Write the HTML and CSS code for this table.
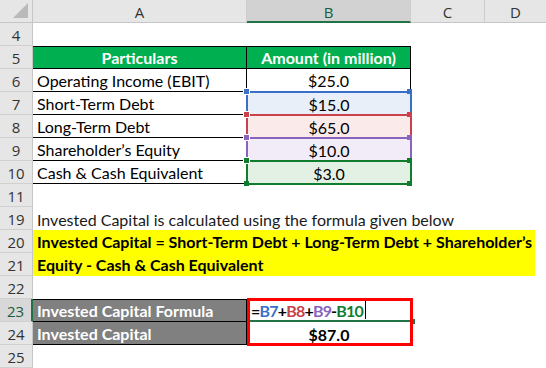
FILE: index.html
```html
<!DOCTYPE html>
<html>
<head>
<meta charset="utf-8">
<link rel="stylesheet" href="styles.css">
</head>
<body>
<div class="sheet">
  <div class="corner"><span class="tri"></span></div>
  <div class="colh">A</div>
  <div class="colh colh-sel">B</div>
  <div class="colh">C</div>
  <div class="colh colh-last">D</div>

  <div class="rowh">4</div><div class="c"></div><div class="c"></div><div class="c"></div><div class="c"></div>

  <div class="rowh">5</div>
  <div class="c th th-a">Particulars</div>
  <div class="c th th-b">Amount (in million)</div>
  <div class="c"></div><div class="c"></div>

  <div class="rowh">6</div>
  <div class="c ta">Operating Income (EBIT)</div>
  <div class="c tb">$25.0</div>
  <div class="c"></div><div class="c"></div>

  <div class="rowh">7</div>
  <div class="c ta">Short-Term Debt</div>
  <div class="c tb ref ref-blue">$15.0</div>
  <div class="c"></div><div class="c"></div>

  <div class="rowh">8</div>
  <div class="c ta">Long-Term Debt</div>
  <div class="c tb ref ref-red">$65.0</div>
  <div class="c"></div><div class="c"></div>

  <div class="rowh">9</div>
  <div class="c ta">Shareholder’s Equity</div>
  <div class="c tb ref ref-purple">$10.0</div>
  <div class="c"></div><div class="c"></div>

  <div class="rowh">10</div>
  <div class="c ta">Cash &amp; Cash Equivalent</div>
  <div class="c tb ref ref-green">$3.0</div>
  <div class="c"></div><div class="c"></div>

  <div class="rowh">11</div><div class="c"></div><div class="c"></div><div class="c"></div><div class="c"></div>

  <div class="rowh">19</div>
  <div class="c note">Invested Capital is calculated using the formula given below</div>

  <div class="rowh">20</div>
  <div class="yellow">Invested Capital = Short-Term Debt + Long-Term Debt + Shareholder’s<br>Equity - Cash &amp; Cash Equivalent</div>
  <div class="rowh">21</div>

  <div class="rowh">22</div><div class="c"></div><div class="c"></div><div class="c"></div><div class="c"></div>

  <div class="rowh rowh-sel">23</div>
  <div class="c grey grey-top">Invested Capital Formula</div>
  <div class="c formula"><span class="k">=</span><span class="r-blue">B7</span><span class="k">+</span><span class="r-red">B8</span><span class="k">+</span><span class="r-purple">B9</span><span class="k">-</span><span class="r-green">B10</span><span class="caret"></span><span class="redbox"></span><span class="active-handle"></span></div>
  <div class="c"></div><div class="c"></div>

  <div class="rowh">24</div>
  <div class="c grey">Invested Capital</div>
  <div class="c total">$87.0</div>
  <div class="c"></div><div class="c"></div>

  <div class="rowh">25</div><div class="c"></div><div class="c"></div><div class="c"></div><div class="c"></div>
</div>
</body>
</html>
```

FILE: styles.css
```css
html, body {
  margin: 0;
  padding: 0;
  background: #ffffff;
  overflow: hidden;
}

.sheet {
  display: grid;
  grid-template-columns: 33px 214px 164px 74px 61px;
  grid-auto-rows: 23px;
  width: 546px;
  height: 368px;
  font-family: Lato, "Open Sans", sans-serif;
  font-size: 16px;
  color: #000;
}

.corner {
  position: relative;
  background: #e6e6e6;
  border-right: 1px solid #c6c6c6;
  border-bottom: 1px solid #c6c6c6;
  box-sizing: border-box;
}
.tri {
  position: absolute;
  right: 4px;
  bottom: 4px;
  width: 0;
  height: 0;
  border-left: 15px solid transparent;
  border-bottom: 15px solid #b9b9b9;
}

.colh {
  background: #e6e6e6;
  border-right: 1px solid #cdcdcd;
  border-bottom: 1px solid #c6c6c6;
  box-sizing: border-box;
  display: flex;
  align-items: center;
  justify-content: center;
  color: #333;
  font-family: "Open Sans", sans-serif;
  font-size: 15px;
  padding-top: 1px;
}
.colh-sel {
  background: #d2d2d2;
  border-bottom: 2px solid #217346;
  color: #185c3a;
  padding-top: 2px;
}
.colh-last { border-right: none; }

.rowh {
  background: #e6e6e6;
  border-right: 1px solid #c6c6c6;
  border-bottom: 1px solid #d0d0d0;
  box-sizing: border-box;
  display: flex;
  align-items: center;
  justify-content: center;
  color: #333;
  font-family: "Open Sans", sans-serif;
  font-size: 15px;
  padding-top: 1px;
}
.rowh-sel {
  background: #d8d8d8;
  border-right: 2px solid #217346;
  color: #185c3a;
}

.c {
  box-sizing: border-box;
  display: flex;
  align-items: flex-end;
  padding: 0 4px 1px;
  white-space: nowrap;
  position: relative;
}

.th {
  background: #00b050;
  color: #fff;
  font-weight: 700;
  justify-content: center;
  border-top: 1px solid #000;
  border-bottom: 1px solid #000;
  border-right: 1px solid #000;
}

.ta {
  border-bottom: 1px solid #000;
  border-right: 1px solid #000;
}
.tb {
  justify-content: center;
  border-bottom: 1px solid #000;
  border-right: 1px solid #000;
}

.ref {
  background: var(--fill);
  border: none;
}
.ref::before {
  content: "";
  position: absolute;
  left: -1px;
  top: -1px;
  width: 166px;
  height: 25px;
  box-sizing: border-box;
  border: 2px solid var(--c);
  z-index: 1;
}
.ref::after {
  content: "";
  position: absolute;
  left: -3px;
  top: -3px;
  width: 5px;
  height: 5px;
  background: var(--c);
  outline: 1px solid #fff;
  box-shadow: 163px 0 0 var(--c), 0 23px 0 var(--c), 163px 23px 0 var(--c);
  z-index: 2;
}
.ref-blue { --c: #3a6fc8; --fill: #e8eff9; }
.ref-red { --c: #c8414b; --fill: #fbeaea; }
.ref-purple { --c: #8a63bd; --fill: #f1ecf8; }
.ref-green { --c: #107c2e; --fill: #e3f1e5; }

.note {
  grid-column: 2 / 6;
  color: #1a1a1a;
}

.yellow {
  grid-column: 2 / 6;
  grid-row: span 2;
  margin-right: 11px;
  background: #ffff00;
  font-weight: 700;
  line-height: 23px;
  padding: 0 4px;
  white-space: nowrap;
}

.grey {
  background: #808080;
  color: #fff;
  font-weight: 700;
  border-bottom: 1px solid #000;
  border-right: 1px solid #000;
}
.grey-top { border-top: 1px solid #000; }

.formula {
  font-weight: 700;
  letter-spacing: -0.8px;
  padding-left: 3px;
  border-left: 1px solid #217346;
  border-bottom: 2px solid #217346;
  padding-bottom: 0;
}
.k { color: #000; }
.r-blue { color: #3a6fc8; }
.r-red { color: #c8414b; }
.r-purple { color: #8a63bd; }
.r-green { color: #107c2e; }
.caret {
  display: inline-block;
  width: 1px;
  height: 18px;
  background: #000;
  margin-left: 2px;
  margin-bottom: 1px;
}
.redbox {
  position: absolute;
  left: -1px;
  top: -1px;
  width: 166px;
  height: 48px;
  box-sizing: border-box;
  border: 3px solid #ff0000;
  z-index: 3;
}
.active-handle {
  position: absolute;
  right: -4px;
  bottom: -4px;
  width: 5px;
  height: 5px;
  background: #217346;
  z-index: 2;
}

.total {
  justify-content: center;
  font-weight: 700;
}
```
